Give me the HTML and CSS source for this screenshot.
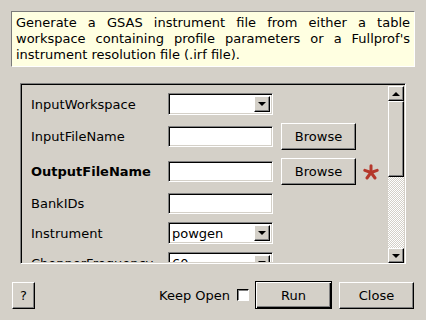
FILE: index.html
```html
<!DOCTYPE html>
<html lang="en">

<head>
    <meta charset="UTF-8">
    <meta name="viewport" content="width=device-width, initial-scale=1.0">
    <title>GenerateGSASInstrumentFile</title>
    <link rel="stylesheet" href="styles.css">
</head>

<body>

    <div class="dialog">
        <div class="summary">Generate a GSAS instrument file from either a table workspace containing profile
            parameters or a Fullprof's instrument resolution file (.irf file).</div>

        <div class="frame">
            <div class="viewport">
                <div class="prop-row">
                    <span class="prop-label">InputWorkspace</span>
                    <div class="combo"><span class="combo-text"></span><span class="combo-arrow"></span></div>
                </div>
                <div class="prop-row">
                    <span class="prop-label">InputFileName</span>
                    <div class="field"></div>
                    <button class="btn btn-browse">Browse</button>
                </div>
                <div class="prop-row">
                    <span class="prop-label prop-required">OutputFileName</span>
                    <div class="field"></div>
                    <button class="btn btn-browse">Browse</button>
                    <!-- required marker -->
                    <svg class="star" width="16" height="16" viewBox="0 0 16 16">
                        <g stroke="#b5382c" stroke-width="3" stroke-linecap="round">
                            <line x1="8" y1="8.5" x2="8" y2="1.8" />
                            <line x1="8" y1="8.5" x2="1.8" y2="6.4" />
                            <line x1="8" y1="8.5" x2="14.2" y2="6.4" />
                            <line x1="8" y1="8.5" x2="4" y2="14" />
                            <line x1="8" y1="8.5" x2="12" y2="14" />
                        </g>
                    </svg>
                </div>
                <div class="prop-row">
                    <span class="prop-label">BankIDs</span>
                    <div class="field"></div>
                </div>
                <div class="prop-row">
                    <span class="prop-label">Instrument</span>
                    <div class="combo"><span class="combo-text">powgen</span><span class="combo-arrow"></span></div>
                </div>
                <div class="prop-row">
                    <span class="prop-label">ChopperFrequency</span>
                    <div class="combo"><span class="combo-text">60</span><span class="combo-arrow"></span></div>
                </div>
            </div>

            <div class="scrollbar">
                <div class="sb-btn"><span class="arrow-up"></span></div>
                <div class="sb-thumb"></div>
                <div class="sb-track"></div>
                <div class="sb-btn"><span class="arrow-down"></span></div>
            </div>
        </div>

        <div class="button-bar">
            <button class="btn btn-help">?</button>
            <span class="spacer"></span>
            <label class="keep-open">Keep Open <span class="check"></span></label>
            <button class="btn btn-default">Run</button>
            <button class="btn btn-close">Close</button>
        </div>
    </div>

</body>

</html>
```

FILE: styles.css
```css
body {
    margin: 0;
    padding: 0;
    font-family: 'DejaVu Sans', sans-serif;
    font-size: 13px;
    color: #000000;
    background: #d4d0c8;
}

.dialog {
    height: 320px;
    box-sizing: border-box;
    padding: 11px 11px 0 11px;
    display: flex;
    flex-direction: column;
}

.summary {
    height: 56px;
    box-sizing: border-box;
    padding: 3px 4px;
    line-height: 16px;
    text-align: justify;
    background: #ffffe1;
    border: 1px solid;
    border-color: #7a7a7a #ffffff #ffffff #7a7a7a;
    margin-bottom: 16px;
}

.frame {
    height: 181px;
    box-sizing: border-box;
    margin: 0 9px 17px 9px;
    border: 1px solid;
    border-color: #808080 #ffffff #ffffff #808080;
    box-shadow: inset 1px 1px #000000;
    display: flex;
    overflow: hidden;
}

.viewport {
    flex: 1;
    padding: 9px 0 0 10px;
    display: flex;
    flex-direction: column;
    gap: 8px;
    overflow: hidden;
    margin-bottom: 1px;
}

.prop-row {
    display: flex;
    align-items: center;
    flex-shrink: 0;
}

.prop-label {
    width: 137px;
    flex-shrink: 0;
}

.prop-required {
    font-weight: 700;
}

.field,
.combo {
    width: 105px;
    height: 21px;
    box-sizing: border-box;
    background: #ffffff;
    border: 1px solid;
    border-color: #808080 #ffffff #ffffff #808080;
    box-shadow: inset 1px 1px #000000, inset -1px -1px #d4d0c8;
}

.combo {
    height: 22px;
    display: flex;
    align-items: stretch;
    padding: 2px;
}

.combo-text {
    flex: 1;
    padding-left: 1px;
    line-height: 17px;
}

.combo-arrow {
    width: 16px;
    box-sizing: border-box;
    background: #d4d0c8;
    border: 1px solid;
    border-color: #ffffff #000000 #000000 #ffffff;
    box-shadow: inset -1px -1px #808080;
    display: flex;
    align-items: center;
    justify-content: center;
}

.combo-arrow::after,
.arrow-down {
    content: "";
    width: 0;
    height: 0;
    border-left: 4px solid transparent;
    border-right: 4px solid transparent;
    border-top: 4px solid #000000;
}

.arrow-up {
    width: 0;
    height: 0;
    border-left: 4px solid transparent;
    border-right: 4px solid transparent;
    border-bottom: 4px solid #000000;
}

.btn {
    font-family: 'DejaVu Sans', sans-serif;
    font-size: 13px;
    color: #000000;
    height: 27px;
    box-sizing: border-box;
    padding: 0;
    margin: 0;
    background: #d4d0c8;
    border: 1px solid;
    border-color: #ffffff #000000 #000000 #ffffff;
    box-shadow: inset -1px -1px #808080;
}

.btn-browse {
    width: 75px;
    margin-left: 8px;
}

.star {
    margin-left: 7px;
    flex-shrink: 0;
}

.scrollbar {
    width: 16px;
    margin: 2px 1px 0 0;
    display: flex;
    flex-direction: column;
}

.sb-btn {
    height: 15px;
    box-sizing: border-box;
    background: #d4d0c8;
    border: 1px solid;
    border-color: #ffffff #000000 #000000 #ffffff;
    box-shadow: inset -1px -1px #808080;
    display: flex;
    align-items: center;
    justify-content: center;
}

.sb-thumb {
    height: 76px;
    box-sizing: border-box;
    background: #d4d0c8;
    border: 1px solid;
    border-color: #ffffff #000000 #000000 #ffffff;
    box-shadow: inset -1px -1px #808080;
}

.sb-track {
    flex: 1;
    background: repeating-conic-gradient(#ffffff 0 25%, #d4d0c8 0 50%) 0 0 / 2px 2px;
}

.button-bar {
    height: 28px;
    display: flex;
    align-items: center;
    padding-left: 1px;
}

.btn-help {
    width: 23px;
}

.spacer {
    flex: 1;
}

.keep-open {
    display: flex;
    align-items: center;
    gap: 7px;
    margin-right: 6px;
}

.check {
    width: 12px;
    height: 12px;
    box-sizing: border-box;
    background: #ffffff;
    border: 1px solid;
    border-color: #000000 #ffffff #ffffff #000000;
    box-shadow: inset 1px 1px #808080;
}

.btn-default {
    width: 77px;
    height: 28px;
    border: 1px solid #000000;
    box-shadow: inset 1px 1px #ffffff, inset -1px -1px #000000, inset -2px -2px #808080;
    margin-right: 7px;
}

.btn-close {
    width: 75px;
    margin-right: 1px;
}
```
